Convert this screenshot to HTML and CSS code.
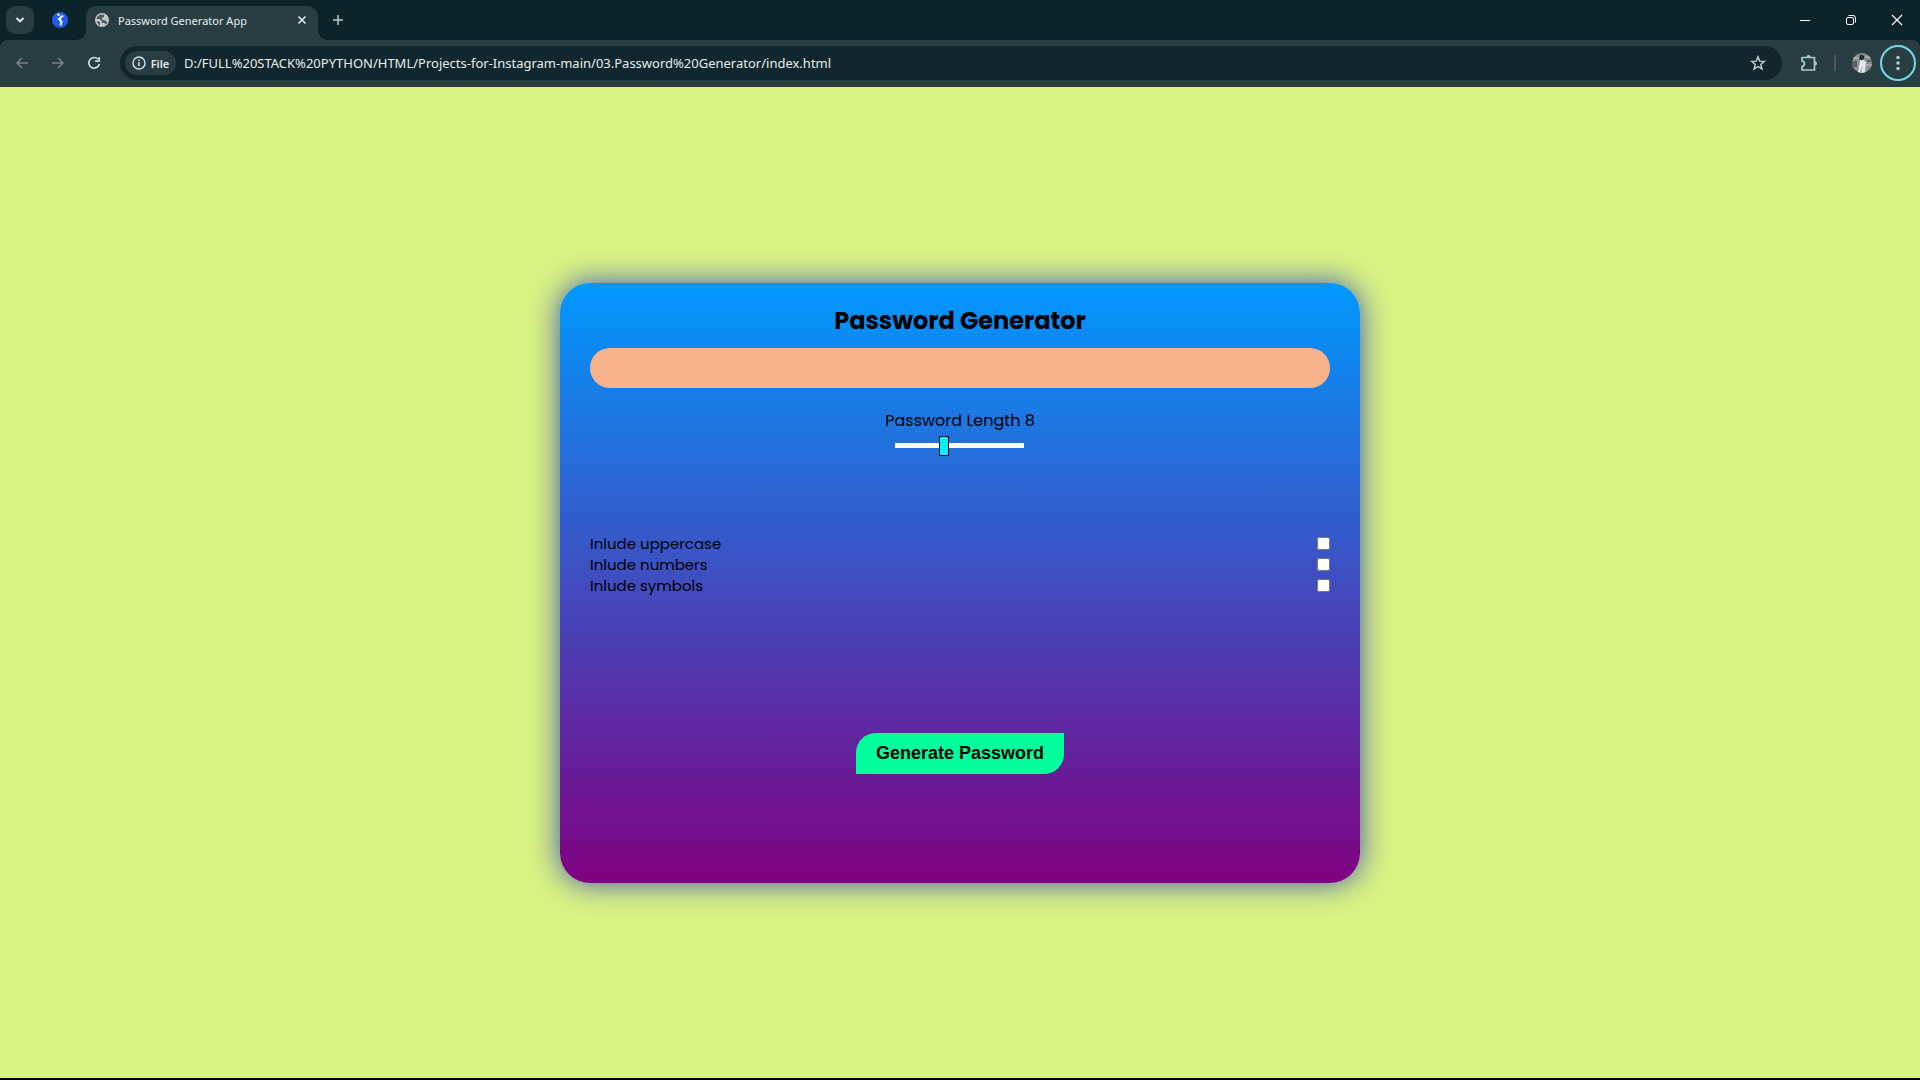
FILE: index.html
```html
<!DOCTYPE html>
<html lang="en">
<head>
<meta charset="utf-8">
<title>Password Generator App</title>
<link rel="stylesheet" href="styles.css">
</head>
<body>
<header class="browser">
  <div class="tab-strip">
    <button class="tab-search" aria-label="Search tabs"><svg width="12" height="12" viewBox="0 0 12 12"><path d="M2.500 4l3.500 3.500L9.500 4" fill="none" stroke="#e3eef0" stroke-width="1.800"/></svg></button>
    <button class="pinned-tab" aria-label="Pinned tab"><svg width="16" height="16" viewBox="0 0 16 16"><circle cx="8" cy="8" r="8" fill="#2459f0"/><path d="M5.500 2l2 1.500M11 3.500L7 7l2.500 2.500L8.500 13.500" fill="none" stroke="#fff" stroke-width="2"/></svg></button>
    <div class="tab">
      <svg width="16" height="16" viewBox="0 0 16 16"><circle cx="8" cy="8" r="7" fill="#c0c6c9"/><path d="M7.500 2.500C5 3 3 4 2.500 7h3.200l2 2v2l2.500-.2 1.300 1.700 2-2-2-2-3-.5-.5-2L10 5V3z" fill="#4c5c61"/><path d="M3 9l3 1v3.500C4.500 13 3 11 3 9z" fill="#4c5c61"/></svg>
      <span class="tab-title">Password Generator App</span>
      <button class="tab-close" aria-label="Close tab"><svg width="10" height="10" viewBox="0 0 10 10"><path d="M1.500 1.500l7 7M8.500 1.500l-7 7" stroke="#e3eef0" stroke-width="1.600"/></svg></button>
    </div>
    <button class="new-tab" aria-label="New tab"><svg width="12" height="12" viewBox="0 0 12 12"><path d="M6 1v10M1 6h10" stroke="#b9c9cd" stroke-width="1.500"/></svg></button>
    <div class="window-controls">
      <button aria-label="Minimize"><svg width="12" height="12" viewBox="0 0 12 12"><path d="M1 6.500h10" stroke="#fff"/></svg></button>
      <button aria-label="Restore"><svg width="12" height="12" viewBox="0 0 12 12"><rect x="1.500" y="3.500" width="7" height="7" rx="1.500" fill="none" stroke="#fff"/><path d="M3.500 1.500H8a2.500 2.500 0 0 1 2.500 2.500v4.500" fill="none" stroke="#fff"/></svg></button>
      <button aria-label="Close"><svg width="12" height="12" viewBox="0 0 12 12"><path d="M1 1l10 10M11 1L1 11" stroke="#fff" stroke-width="1.200"/></svg></button>
    </div>
  </div>
  <div class="toolbar">
    <button class="tool" aria-label="Back"><svg width="14" height="14" viewBox="0 0 14 14"><path d="M13 7H2M7 2L2 7l5 5" fill="none" stroke="#72858a" stroke-width="1.600"/></svg></button>
    <button class="tool" aria-label="Forward"><svg width="14" height="14" viewBox="0 0 14 14"><path d="M1 7h11M7 2l5 5-5 5" fill="none" stroke="#72858a" stroke-width="1.600"/></svg></button>
    <button class="tool" aria-label="Reload"><svg width="14" height="14" viewBox="0 0 14 14"><path d="M11 3.200A5.300 5.300 0 1 0 12.300 8M12.200 1v4.200H8" fill="none" stroke="#c3dade" stroke-width="1.700"/></svg></button>
    <div class="omnibox">
      <button class="file-chip"><svg width="14" height="14" viewBox="0 0 14 14"><circle cx="7" cy="7" r="6" fill="none" stroke="#d5e3e6" stroke-width="1.400"/><path d="M7 6v4M7 3.500v1.500" stroke="#d5e3e6" stroke-width="1.500"/></svg>File</button>
      <input class="url" type="text" aria-label="Address" value="D:/FULL%20STACK%20PYTHON/HTML/Projects-for-Instagram-main/03.Password%20Generator/index.html">
      <button class="star" aria-label="Bookmark"><svg width="16" height="16" viewBox="0 0 16 16"><path d="M8 1.800l1.700 4.300 4.600.3-3.500 3 1.100 4.500L8 11.500l-3.900 2.400 1.100-4.500-3.500-3 4.600-.3z" fill="none" stroke="#c3d4d8" stroke-width="1.400"/></svg></button>
    </div>
    <button class="tool" aria-label="Extensions"><svg width="18" height="18" viewBox="0 0 18 18"><path d="M2 3.500H14.500V16H2V12.500c3.200-.6 3.200-5 0-5.600z" fill="none" stroke="#a9cbd2" stroke-width="1.700" stroke-linejoin="round"/><path d="M6.500 3a2 2 0 0 1 4 0zM15 7.500a2 2 0 0 1 0 4z" fill="#a9cbd2"/></svg></button>
    <span class="separator"></span>
    <button class="tool" aria-label="Profile"><svg width="20" height="20" viewBox="0 0 20 20"><defs><clipPath id="avatar"><circle cx="10" cy="10" r="10"/></clipPath></defs><g clip-path="url(#avatar)"><path fill="#8b8f91" d="M0 0h20v20H0z"/><path d="M0 4h8v2H0zM13 3h7v2h-7zM14 11h6v2h-6z" fill="#aaadaf"/><path d="M0 8h5v6H0zM15 7h5v2h-5z" fill="#5c6163"/><path d="M8 7l3-1 3 3-1 11H6l1-7z" fill="#e4e5e6"/><path d="M8 2c3-1 5 1 4 4L9.500 7.500 7 6z" fill="#292b2d"/><path d="M9.500 13l1 7h-3z" fill="#b9bdbf"/></g></svg></button>
    <button class="tool menu" aria-label="Menu"><svg width="4" height="16" viewBox="0 0 4 16"><g fill="#a9cbd2"><circle cx="2" cy="2.500" r="1.800"/><circle cx="2" cy="8" r="1.800"/><circle cx="2" cy="13.500" r="1.800"/></g></svg></button>
  </div>
</header>
<main class="page">
  <form class="card">
    <h1 class="title">Password Generator</h1>
    <input class="password" type="text" aria-label="Generated password" readonly>
    <div class="length">
      <label for="length">Password Length <span>8</span></label>
      <input class="slider" id="length" type="range" min="1" max="20" value="8">
    </div>
    <div class="options">
      <div class="option"><label for="upper">Inlude uppercase</label><input type="checkbox" id="upper"></div>
      <div class="option"><label for="numbers">Inlude numbers</label><input type="checkbox" id="numbers"></div>
      <div class="option"><label for="symbols">Inlude symbols</label><input type="checkbox" id="symbols"></div>
    </div>
    <button class="generate" type="button">Generate Password</button>
  </form>
</main>
</body>
</html>
```
FILE: styles.css
```css
* { box-sizing: border-box; }

body {
  margin: 0;
  min-height: 100vh;
  display: flex;
  flex-direction: column;
  border-bottom: 2px solid #000;
  background: #d8f283;
  font-family: Poppins, Inter, sans-serif;
  color: #000;
}

svg { display: block; flex: none; }

.browser {
  background: #0b2429;
  font-family: "Segoe UI", "Noto Sans", sans-serif;
}

.browser button {
  display: flex;
  align-items: center;
  justify-content: center;
  flex: none;
  padding: 0;
  border: 0;
  background: none;
  color: #e3eef0;
  font-family: inherit;
}

/* Tab strip */
.tab-strip {
  display: flex;
  align-items: flex-start;
  height: 40px;
  padding: 6px 0 0 6px;
}

.browser .tab-search {
  width: 28px;
  height: 28px;
  border-radius: 9px;
  background: #293e43;
}

.pinned-tab { width: 52px; height: 28px; }

.tab {
  position: relative;
  display: flex;
  align-items: center;
  gap: 8px;
  width: 232px;
  height: 34px;
  padding: 0 8px 6px;
  border-radius: 10px 10px 0 0;
  background: #293e43;
  color: #e3eef0;
  font-size: 11px;
}

.tab::before,
.tab::after {
  content: "";
  position: absolute;
  bottom: 0;
  width: 10px;
  height: 10px;
}

.tab::before {
  right: 100%;
  background: radial-gradient(circle at 0 0, transparent 10px, #293e43 10px);
}

.tab::after {
  left: 100%;
  background: radial-gradient(circle at 100% 0, transparent 10px, #293e43 10px);
}

.tab-title { flex: 1; white-space: nowrap; }
.tab-close { width: 16px; height: 16px; }
.new-tab { width: 40px; height: 28px; }
.window-controls { display: flex; margin-left: auto; }
.window-controls button { width: 46px; height: 28px; }

/* Toolbar */
.toolbar {
  display: flex;
  align-items: center;
  padding: 5px 4px 6px;
  border-radius: 8px 8px 0 0;
  background: #293e43;
}

.tool { width: 36px; height: 36px; }

.browser .menu { border: 2px solid #76d9ea; border-radius: 50%; }

.omnibox {
  display: flex;
  align-items: center;
  flex: 1;
  height: 34px;
  margin: 0 9px 0 8px;
  padding: 0 16px 0 5px;
  border-radius: 17px;
  background: #12272d;
}

.browser .file-chip {
  gap: 5px;
  width: 51px;
  height: 24px;
  border-radius: 12px;
  background: #293e43;
  font-size: 11px;
  font-weight: 600;
}

.url {
  flex: 1;
  min-width: 0;
  margin-left: 8px;
  padding: 0;
  border: 0;
  outline: 0;
  background: none;
  color: #e3eef0;
  font: 13px "Segoe UI", "Noto Sans", sans-serif;
}

.separator {
  width: 2px;
  height: 16px;
  margin: 0 8px 0 7px;
  background: #45595e;
}

/* Generator */
.page {
  flex: 1;
  display: flex;
  align-items: center;
  justify-content: center;
}

.card {
  display: flex;
  flex-direction: column;
  align-items: center;
  width: 100%;
  max-width: 800px;
  min-height: 600px;
  padding: 20px 30px;
  border-radius: 30px;
  background: linear-gradient(#0099ff, #800080);
  box-shadow: 0 0 30px #3f51b5;
}

.title {
  margin: 0 0 9px;
  font-size: 24px;
  line-height: 36px;
}

.password {
  width: 100%;
  height: 40px;
  padding: 0 20px;
  border: 0;
  border-radius: 20px;
  background: #f7b18b;
  font-size: 16px;
}

.length {
  display: flex;
  flex-direction: column;
  align-items: center;
  gap: 3px;
  margin-top: 21px;
  font-size: 16px;
  line-height: 24px;
}

.slider {
  width: 129px;
  height: 20px;
  margin: 0;
  appearance: none;
  background: linear-gradient(#fff, #fff) center / 100% 5px no-repeat;
}

.slider::-webkit-slider-thumb {
  appearance: none;
  width: 10px;
  height: 20px;
  border: 1px solid #000;
  background: #00f2ff;
}

.options {
  width: 100%;
  margin-top: 77px;
  font-size: 15px;
  line-height: 21px;
}

.option {
  display: flex;
  align-items: center;
  justify-content: space-between;
}

.option input { width: 13px; height: 13px; margin: 0; }

.generate {
  margin-top: 137px;
  padding: 10px 20px;
  border: 0;
  border-radius: 20px 0;
  background: #00ff9d;
  color: #000;
  font: bold 18px/21px Arial, "Liberation Sans", sans-serif;
}
```
